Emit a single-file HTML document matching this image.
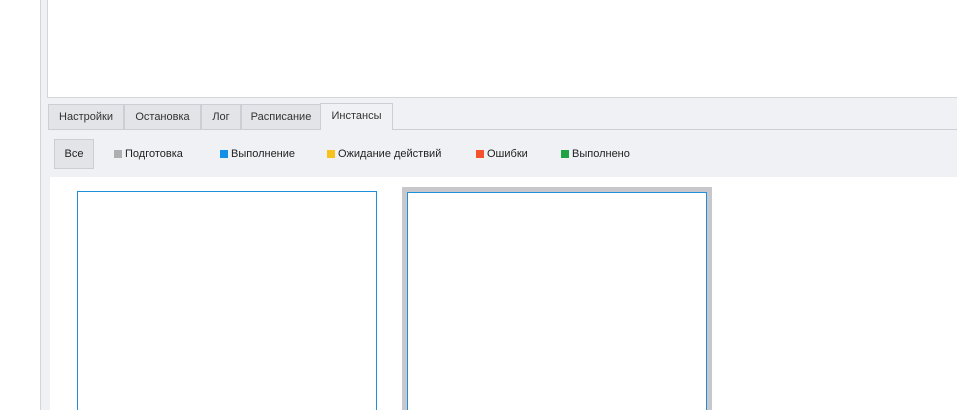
<!DOCTYPE html>
<html style="width:957px;height:410px;overflow:hidden"><head><meta charset="utf-8"><style>
*{margin:0;padding:0;box-sizing:border-box}
body{width:957px;height:410px;overflow:hidden;background:#fff;position:relative;font-family:"Liberation Sans","DejaVu Sans",sans-serif;font-size:11px;color:#222}
.a{position:absolute}
.tab{position:absolute;top:104px;height:25px;background:#e3e4e8;border:1px solid #ccced3;border-bottom:none;line-height:24px;text-align:center;color:#333}
.lg{position:absolute;top:149px;height:10px;line-height:10px}
.lg i{display:inline-block;width:8px;height:8px;vertical-align:top;margin-right:3px;margin-top:1px}
</style></head><body>
<div class="a" style="left:40px;top:0;width:8px;height:410px;background:#f0f1f5;border-left:1px solid #d4d6da"></div>
<div class="a" style="left:47px;top:0;width:910px;height:98px;background:#fff;border-left:1px solid #d4d6da;border-bottom:1px solid #d4d6da"></div>
<div class="a" style="left:48px;top:98px;width:909px;height:312px;background:#f0f1f5"></div>
<div class="a" style="left:48px;top:129px;width:909px;height:1px;background:#ccced3"></div>
<div class="tab" style="left:48px;width:76px">Настройки</div>
<div class="tab" style="left:124px;width:77px">Остановка</div>
<div class="tab" style="left:201px;width:40px">Лог</div>
<div class="tab" style="left:241px;width:80px">Расписание</div>
<div class="tab" style="left:320px;top:103px;height:27px;width:73px;background:#f0f1f5">Инстансы</div>
<div class="a" style="left:54px;top:139px;width:40px;height:30px;background:#e3e4e8;border:1px solid #ccced3;line-height:28px;text-align:center">Все</div>
<div class="lg" style="left:114px"><i style="background:#afafb2"></i>Подготовка</div>
<div class="lg" style="left:220px"><i style="background:#1190e6"></i>Выполнение</div>
<div class="lg" style="left:327px"><i style="background:#f7c21c"></i>Ожидание действий</div>
<div class="lg" style="left:476px"><i style="background:#f4532e"></i>Ошибки</div>
<div class="lg" style="left:561px"><i style="background:#1fa244"></i>Выполнено</div>
<div class="a" style="left:50px;top:177px;width:907px;height:233px;background:#fff"></div>
<div class="a" style="left:77px;top:191px;width:300px;height:225px;border:1px solid #1e8fd8;border-bottom:none"></div>
<div class="a" style="left:402px;top:187px;width:310px;height:223px;background:#c8c8cc"></div>
<div class="a" style="left:407px;top:192px;width:300px;height:218px;background:#fff;border:1px solid #1e8fd8;border-bottom:none"></div>
</body></html>
